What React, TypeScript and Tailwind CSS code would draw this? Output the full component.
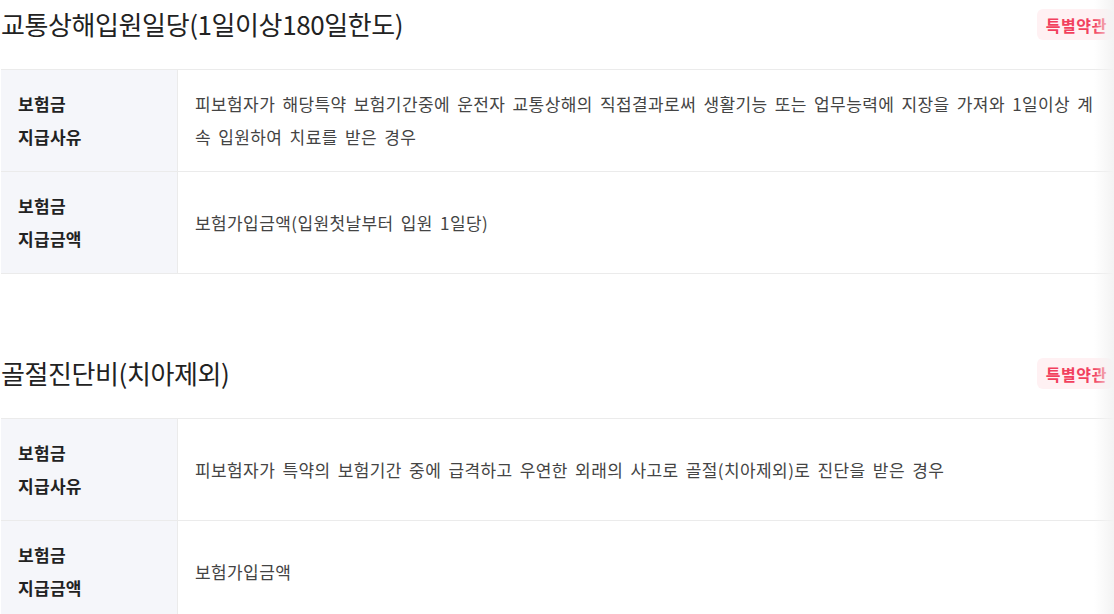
import React from "react";

const font = { fontFamily: '"Noto Sans CJK KR", "Noto Sans", sans-serif' };

type Row = { label: [string, string]; value: string };

function Section({ title, rows }: { title: string; rows: Row[] }) {
  return (
    <section>
      <div className="flex items-start justify-between h-[69px]">
        <h2 className="text-[26px] leading-[48px] text-[#222] tracking-[-0.4px] pl-[1px]">{title}</h2>
        <span className="mt-[9px] mr-[1px] rounded-md bg-[#fff1f3] pl-[9px] pr-[6px] h-[31px] flex items-center text-[16px] tracking-[0.6px] font-bold text-[#f2405e]">
          특별약관
        </span>
      </div>
      <div className="ml-[1px] border-t border-[#ebebeb]">
        {rows.map((r, i) => (
          <div key={i} className="flex border-b border-[#ebebeb]">
            <div className="w-[177px] shrink-0 bg-[#f5f6fa] border-r border-[#ebebeb] pl-[17px] pt-[17px] pb-[18px] text-[17px] tracking-[0.3px] font-bold leading-[33px] text-[#222]">
              {r.label[0]}
              <br />
              {r.label[1]}
            </div>
            <div className="flex-1 flex items-center pl-[17px] pr-[16px] pt-[17px] pb-[18px] text-[17px] tracking-[0.4px] [word-spacing:3px] leading-[33px] text-[#444]">
              {r.value}
            </div>
          </div>
        ))}
      </div>
    </section>
  );
}

export default function App() {
  return (
    <div className="relative w-[1114px] h-[614px] overflow-hidden bg-white" style={font}>
      <Section
        title="교통상해입원일당(1일이상180일한도)"
        rows={[
          {
            label: ["보험금", "지급사유"],
            value:
              "피보험자가 해당특약 보험기간중에 운전자 교통상해의 직접결과로써 생활기능 또는 업무능력에 지장을 가져와 1일이상 계속 입원하여 치료를 받은 경우",
          },
          { label: ["보험금", "지급금액"], value: "보험가입금액(입원첫날부터 입원 1일당)" },
        ]}
      />
      <div className="h-[75px]" />
      <Section
        title="골절진단비(치아제외)"
        rows={[
          {
            label: ["보험금", "지급사유"],
            value: "피보험자가 특약의 보험기간 중에 급격하고 우연한 외래의 사고로 골절(치아제외)로 진단을 받은 경우",
          },
          { label: ["보험금", "지급금액"], value: "보험가입금액" },
        ]}
      />
      <div className="pointer-events-none absolute right-0 top-0 h-full w-[20px] bg-gradient-to-r from-white/0 to-[#f3f3f3]" />
    </div>
  );
}
